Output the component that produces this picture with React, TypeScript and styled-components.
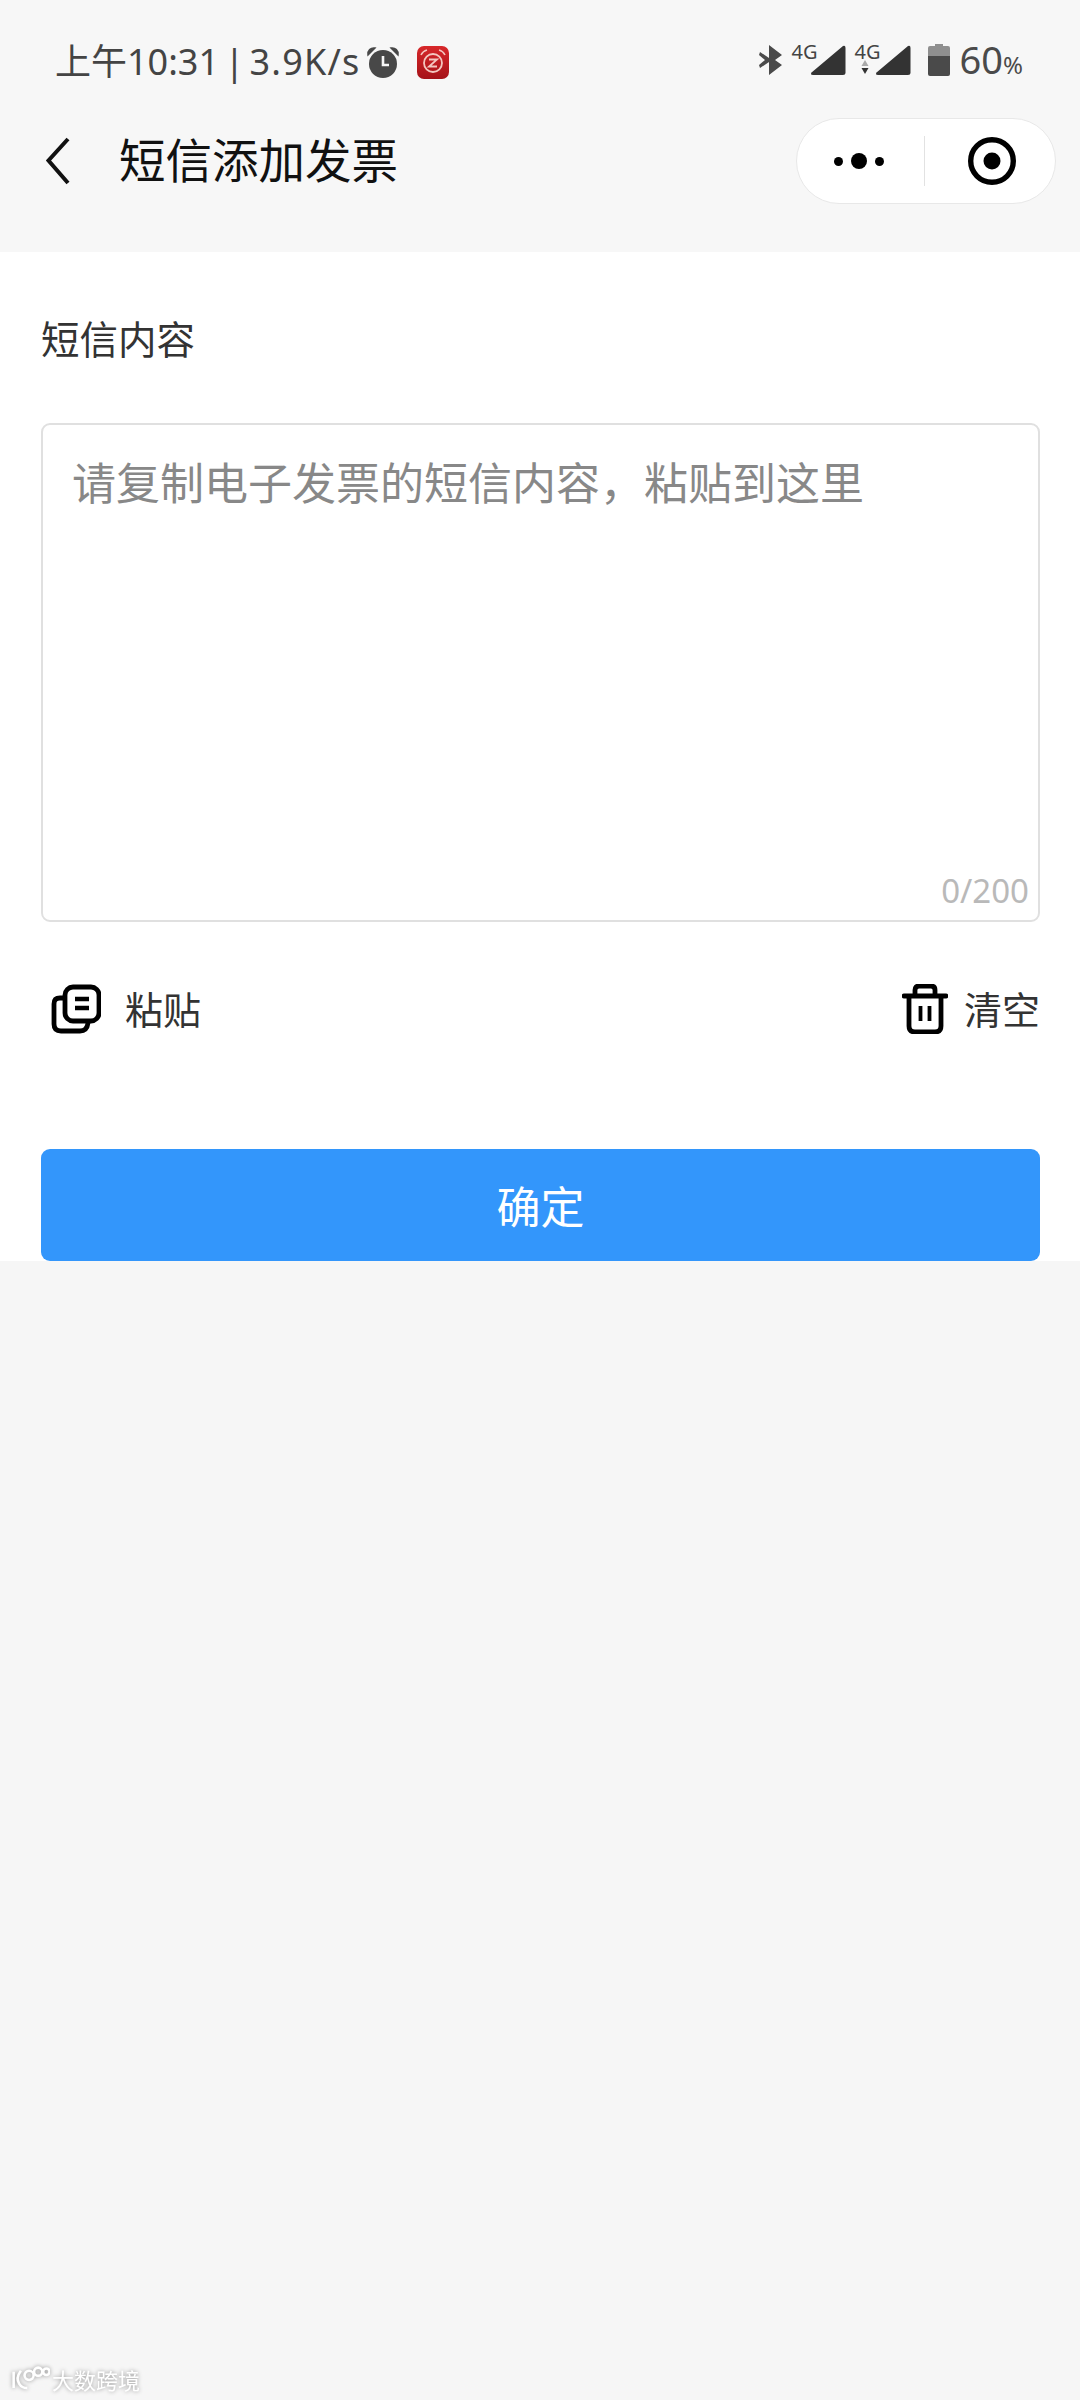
import styled, { createGlobalStyle } from 'styled-components';

const GlobalStyle = createGlobalStyle`
  html, body {
    margin: 0;
    padding: 0;
    background: #f6f6f6;
  }
  * {
    box-sizing: border-box;
  }
`;

const fontStack = `"Noto Sans", "Noto Sans CJK SC", sans-serif`;
const cjkStack = `"Noto Sans CJK SC", "Noto Sans", sans-serif`;

const BackIcon = () => (
  <svg width="26" height="50" viewBox="0 0 26 50" fill="none">
    <path d="M23 3 L3.5 24.5 L23 47" stroke="#111" strokeWidth="4" />
  </svg>
);

const AlarmIcon = () => (
  <svg width="34" height="34" viewBox="0 0 34 34">
    <circle cx="17" cy="19" r="14" fill="#484848" />
    <path d="M2 10 L9 3 A6 6 0 0 0 2 10 Z M32 10 L25 3 A6 6 0 0 1 32 10 Z" fill="#484848" stroke="#484848" strokeWidth="1.5" />
    <path d="M17 11 V20 H23" fill="none" stroke="#f7f7f7" strokeWidth="2.6" />
  </svg>
);

const ClockAppIcon = () => (
  <svg width="32" height="33" viewBox="0 0 32 33">
    <defs>
      <linearGradient id="clockApp" x1="0" y1="0" x2="0" y2="1">
        <stop offset="0" stopColor="#d8282a" />
        <stop offset="1" stopColor="#a51218" />
      </linearGradient>
    </defs>
    <rect width="32" height="33" rx="7" fill="url(#clockApp)" />
    <circle cx="16" cy="17" r="9" fill="none" stroke="#f4c7c0" strokeWidth="1.8" />
    <path d="M12 13.5 H20 L12 20.5 H20" fill="none" stroke="#f4c7c0" strokeWidth="1.8" />
    <path d="M4 9 Q6 5 10 4 M28 9 Q26 5 22 4" fill="none" stroke="#f4c7c0" strokeWidth="1.6" />
  </svg>
);

const BluetoothIcon = () => (
  <svg width="24" height="32" viewBox="0 0 24 32">
    <path d="M10 1 L23 11 L16 16 L23 21 L10 31 Z M1 8 L10 14 V18 L1 24 L0 21 L6 16 L0 11 Z" fill="#4a4a4a" />
  </svg>
);

const SignalIcon = () => (
  <svg width="36" height="31" viewBox="0 0 36 31">
    <path d="M33 1 Q35.500 0 35.500 3 V28 Q35.500 30 33 30 H3 Q0 30 1.500 27.500 Z" fill="#333" />
  </svg>
);

const DataArrows = () => (
  <svg width="8" height="14" viewBox="0 0 8 14">
    <path d="M4 0 L7.500 6 H0.500 Z" fill="#aaa" />
    <path d="M4 14 L7.500 8 H0.500 Z" fill="#333" />
  </svg>
);

const BatteryIcon = () => (
  <svg width="22" height="32" viewBox="0 0 22 32">
    <path d="M7 0 H15 V2 H20 Q22 2 22 4 V12 H0 V4 Q0 2 2 2 H7 Z" fill="#8f8f8f" />
    <path d="M0 12 H22 V30 Q22 32 20 32 H2 Q0 32 0 30 Z" fill="#4a4a4a" />
  </svg>
);

const TargetIcon = () => (
  <svg width="48" height="48" viewBox="0 0 48 48">
    <circle cx="24" cy="24" r="21.300" fill="none" stroke="#000" strokeWidth="5.400" />
    <circle cx="24" cy="24" r="8.500" fill="#000" />
  </svg>
);

const PasteIcon = () => (
  <svg width="50" height="50" viewBox="0 0 50 50" fill="none" stroke="#000" strokeWidth="4.800">
    <path d="M13 14 H9 Q3 14 3 20 V40 Q3 47 10 47 H29 Q36 47 37 39" strokeLinecap="round" />
    <rect x="14" y="3" width="34" height="34" rx="8" />
    <path d="M24 15 H38 M24 24 H38" strokeWidth="4.400" />
  </svg>
);

const TrashIcon = () => (
  <svg width="46" height="50" viewBox="0 0 46 50" fill="none" stroke="#000" strokeWidth="4.800">
    <path d="M2 12 H44" strokeLinecap="round" />
    <path d="M13 11 V6 Q13 2 17 2 H29 Q33 2 33 6 V11" />
    <path d="M7 12 V42 Q7 48 13 48 H33 Q39 48 39 42 V12" />
    <path d="M18.500 22 V37 M27.500 22 V37" strokeWidth="3.800" />
  </svg>
);

const WatermarkLogo = () => (
  <svg width="40" height="30" viewBox="0 0 44 30" fill="none" stroke="#fff" strokeWidth="2.800">
    <path d="M4 7 V25 M12 6 Q6 14 10 20 Q13 25 19 25" />
    <circle cx="21" cy="11" r="5" />
    <circle cx="31" cy="7" r="4.500" />
    <circle cx="40" cy="7" r="3.500" />
  </svg>
);

const App = () => {
  return (
    <>
      <GlobalStyle />
      <Page>
        <Header>
          <StatusBar>
            <StatusLeft>
              <StatusText>
                上午10:31 | <Speed>3.9K/s</Speed>
              </StatusText>
              <AlarmSlot>
                <AlarmIcon />
              </AlarmSlot>
              <ClockAppIcon />
            </StatusLeft>
            <StatusRight>
              <BluetoothIcon />
              <SignalGroup>
                <NetLabel>4G</NetLabel>
                <SignalIcon />
              </SignalGroup>
              <SignalGroup>
                <NetStack>
                  <NetLabel>4G</NetLabel>
                  <DataArrows />
                </NetStack>
                <SignalIcon />
              </SignalGroup>
              <BatterySlot>
                <BatteryIcon />
              </BatterySlot>
              <BatteryText>
                60<small>%</small>
              </BatteryText>
            </StatusRight>
          </StatusBar>
          <NavBar>
            <NavLeft>
              <BackIcon />
              <NavTitle>短信添加发票</NavTitle>
            </NavLeft>
            <Capsule>
              <CapsuleSide>
                <MoreDots>
                  <Dot />
                  <Dot $big />
                  <Dot />
                </MoreDots>
              </CapsuleSide>
              <CapsuleDivider />
              <CapsuleSide $shifted>
                <TargetIcon />
              </CapsuleSide>
            </Capsule>
          </NavBar>
        </Header>
        <Card>
          <SectionLabel>短信内容</SectionLabel>
          <MessageBox>
            <Placeholder>请复制电子发票的短信内容，粘贴到这里</Placeholder>
            <Counter>0/200</Counter>
          </MessageBox>
          <ActionRow>
            <ActionButton>
              <PasteIcon />
              <span>粘贴</span>
            </ActionButton>
            <ActionButton $tight>
              <TrashIcon />
              <span>清空</span>
            </ActionButton>
          </ActionRow>
          <SubmitButton type="button">确定</SubmitButton>
        </Card>
        <Watermark>
          <WatermarkLogo />
          <span>大数跨境</span>
        </Watermark>
      </Page>
    </>
  );
};

const Page = styled.div`
  position: relative;
  width: 1080px;
  height: 2400px;
  overflow: hidden;
  background: #f6f6f6;
  font-family: ${cjkStack};
`;

const Header = styled.header`
  height: 252px;
  background: #f7f7f7;
  display: flex;
  flex-direction: column;
`;

const StatusBar = styled.div`
  height: 118px;
  padding: 42px 57px 0 55px;
  display: flex;
  justify-content: space-between;
  align-items: flex-start;
`;

const StatusLeft = styled.div`
  display: flex;
  align-items: center;
  height: 36px;
  margin-top: 2px;
`;

const StatusText = styled.span`
  font-family: ${fontStack};
  font-size: 36px;
  line-height: 36px;
  color: #444;
  white-space: nowrap;
  word-spacing: -4px;
`;

const Speed = styled.span`
  letter-spacing: 1.2px;
`;

const AlarmSlot = styled.div`
  display: flex;
  margin: 0 17px 0 5px;
`;

const StatusRight = styled.div`
  display: flex;
  align-items: flex-end;
  height: 34px;
`;

const SignalGroup = styled.div`
  display: flex;
  align-items: flex-end;
  margin-left: 9px;
`;

const NetStack = styled.div`
  width: 20px;
  height: 32px;
  display: flex;
  flex-direction: column;
  align-items: center;

  span {
    height: 16px;
    width: 20px;
  }
`;

const NetLabel = styled.span`
  font-family: ${fontStack};
  font-size: 20px;
  line-height: 16px;
  height: 32px;
  width: 18px;
  color: #444;
  white-space: nowrap;
`;

const BatterySlot = styled.div`
  display: flex;
  margin-left: 17px;
`;

const BatteryText = styled.span`
  font-family: ${fontStack};
  font-size: 38px;
  line-height: 34px;
  color: #4a4a4a;
  margin: 0 0 -6px 10px;
  white-space: nowrap;

  small {
    font-size: 24px;
  }
`;

const NavBar = styled.div`
  height: 86px;
  padding: 0 24px 0 45px;
  display: flex;
  justify-content: space-between;
  align-items: center;
`;

const NavLeft = styled.div`
  display: flex;
  align-items: center;
  gap: 48px;
`;

const NavTitle = styled.h1`
  margin: 0 0 6px;
  font-size: 46.500px;
  line-height: 60px;
  font-weight: 400;
  color: #111;
`;

const Capsule = styled.div`
  width: 260px;
  height: 86px;
  border-radius: 43px;
  background: #fff;
  border: 1px solid #e8e8e8;
  display: flex;
  align-items: center;
`;

const CapsuleSide = styled.div<{ $shifted?: boolean }>`
  flex: 1;
  display: flex;
  justify-content: center;
  align-items: center;
  padding-left: ${({ $shifted }) => ($shifted ? 3 : 0)}px;
`;

const CapsuleDivider = styled.div`
  width: 1px;
  height: 50px;
  background: #e2e2e2;
`;

const MoreDots = styled.div`
  display: flex;
  align-items: center;
  gap: 8px;
  margin-left: -3px;
`;

const Dot = styled.i<{ $big?: boolean }>`
  width: ${({ $big }) => ($big ? 16 : 9)}px;
  height: ${({ $big }) => ($big ? 16 : 9)}px;
  border-radius: 50%;
  background: #000;
`;

const Card = styled.main`
  height: 1009px;
  background: #fff;
  padding: 0 40px 0 41px;
  display: flex;
  flex-direction: column;
`;

const SectionLabel = styled.div`
  margin-top: 58px;
  font-size: 38.500px;
  line-height: 54px;
  color: #333;
`;

const MessageBox = styled.div`
  margin-top: 59px;
  height: 500px;
  border: 2px solid #e0e0e0;
  border-radius: 9px;
  padding: 27px 29px 0;
  display: flex;
  flex-direction: column;
  justify-content: space-between;
`;

const Placeholder = styled.div`
  font-size: 44px;
  line-height: 58px;
  color: #888;
  white-space: nowrap;
`;

const Counter = styled.div`
  align-self: flex-end;
  margin: 0 -20px 9px 0;
  font-family: ${fontStack};
  font-size: 33px;
  line-height: 40px;
  color: #b9b9b9;
`;

const ActionRow = styled.div`
  margin-top: 62px;
  height: 50px;
  display: flex;
  justify-content: space-between;
  align-items: center;
`;

const ActionButton = styled.div<{ $tight?: boolean }>`
  display: flex;
  align-items: center;
  gap: ${({ $tight }) => ($tight ? 16 : 24)}px;
  padding-left: ${({ $tight }) => ($tight ? 0 : 10)}px;
  font-size: 38px;
  line-height: 50px;
  color: #333;

  span {
    padding-bottom: 3px;
  }
`;

const SubmitButton = styled.button`
  margin-top: 115px;
  height: 112px;
  width: 999px;
  border: none;
  border-radius: 9px;
  padding: 0;
  background: #3396fb;
  color: #fff;
  font-family: ${cjkStack};
  font-size: 44px;
`;

const Watermark = styled.div`
  position: absolute;
  left: 10px;
  bottom: 6px;
  display: flex;
  align-items: center;
  gap: 2px;
  font-size: 22px;
  line-height: 30px;
  color: #fff;
  filter: drop-shadow(0 0 2px rgba(0, 0, 0, 0.4));
`;

export default App;
